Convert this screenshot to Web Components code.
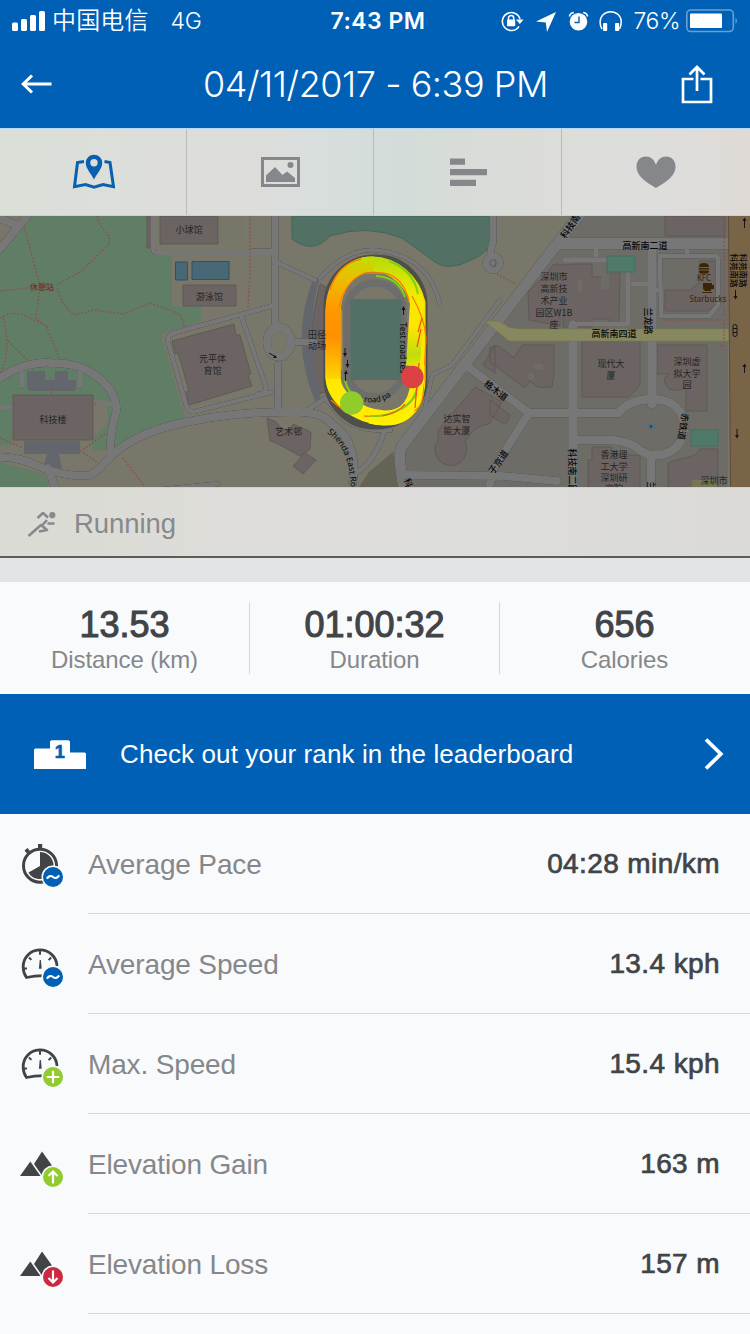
<!DOCTYPE html>
<html lang="en">
<head>
<meta charset="utf-8">
<title>Workout detail</title>
<style>
html,body{margin:0;padding:0}
body{width:750px;height:1334px;overflow:hidden;background:#f9fafc;font-family:"Liberation Sans","Noto Sans CJK SC",sans-serif}
</style>
</head>
<body>
<workout-page></workout-page>
<script>
const define = (name, html) => customElements.define(name, class extends HTMLElement {
  constructor() {
    super();
    this.attachShadow({ mode: 'open' }).innerHTML = typeof html === 'function' ? html(this) : html;
  }
});

define('status-bar', `
<style>
:host{display:grid;grid-template-columns:1fr auto 1fr;align-items:center;height:40px;background:#0060b6;color:#fff;font:400 23px Inter,"Noto Sans CJK SC",sans-serif}
.l,.r{display:flex;align-items:center}
.l{padding-left:12px}
.r{justify-content:flex-end;padding-right:11px}
svg{display:block}
.c{font-size:24px;letter-spacing:.15px;margin-left:6px;font-weight:350;line-height:40px;padding-top:1px}
.g{margin-left:22px;letter-spacing:-.2px;font-weight:350;padding-top:1px}
.t{font-weight:600;letter-spacing:.5px;line-height:40px;padding:1px 0 0 6px}
.p{letter-spacing:-.5px;font-weight:350;margin:0 6px 0 12px;line-height:40px;padding-top:1px}
</style>
<div class="l">
 <svg width="34" height="22" viewBox="0 0 34 22" fill="#fff"><rect x="0" y="12.500" width="6" height="8.500" rx="1.500"/><rect x="9" y="9" width="6" height="12" rx="1.500"/><rect x="18" y="5" width="6" height="16" rx="1.500"/><rect x="27" y="1" width="6" height="20" rx="1.500"/></svg>
 <span class="c">中国电信</span><span class="g">4G</span>
</div>
<div class="t">7:43 PM</div>
<div class="r">
 <svg width="122" height="24" viewBox="498 8 122 24" fill="none" stroke="#fff">
  <path d="M517 25.300A9 9 0 1 1 518 18" stroke-width="1.600"/><path d="M514 18.500h7.600l-3.800 4.600z" fill="#fff" stroke="none"/>
  <path d="M506.500 19v-2a2.600 2.600 0 0 1 5.200 0v2" stroke-width="1.500"/><rect x="505" y="18.600" width="8.200" height="6.600" rx=".8" fill="#fff" stroke="none"/>
  <path d="M554 11L534 20.600l9.800.8L545 31z" fill="#fff" stroke="none"/>
  <circle cx="576.500" cy="20.800" r="8.800" fill="#fff" stroke="none"/><path d="M577 15.500v6h-4.500" stroke="#0060b6" stroke-width="1.400"/>
  <path d="M567.400 15.500q.6-3.400 4.400-4M585.600 15.500q-.6-3.400-4.400-4" stroke-width="1.700"/>
  <path d="M600 28q-2.200-3.500-1.800-7.500a10.500 9.800 0 0 1 21 0q.2 4-1.700 7.500" stroke-width="1.500"/><rect x="601" y="22" width="4.200" height="8" rx="1" fill="#fff" stroke="none"/><rect x="613" y="22" width="4.200" height="8" rx="1" fill="#fff" stroke="none"/>
 </svg>
 <span class="p">76%</span>
 <svg width="53" height="24" viewBox="0 0 53 24"><rect x=".8" y="1" width="46.500" height="21.500" rx="4" fill="none" stroke="#66a0d4" stroke-width="1.600"/><rect x="4" y="4.500" width="32" height="14.500" rx="1" fill="#fff"/><path d="M49.500 8.500q3 3.300 0 6.600z" fill="#66a0d4"/></svg>
</div>`);

define('nav-bar', `
<style>
:host{display:grid;grid-template-columns:50px 1fr 50px;align-items:center;justify-items:center;height:88px;padding:0 28px 0 12px;background:#0060b6;color:#fff;box-sizing:border-box}
h1{margin:0 0 0 17px;font:350 36px/88px Inter,sans-serif;letter-spacing:-.45px;white-space:nowrap}
svg{display:block}
</style>
<svg width="34" height="22" viewBox="0 0 34 22" fill="none" stroke="#fff" stroke-width="3"><path d="M31.500 11H4M12 2.500L3.200 11l8.800 8.500"/></svg>
<h1><slot></slot></h1>
<svg width="34" height="44" viewBox="0 0 34 44" fill="none" stroke="#fff" stroke-width="2.700"><path d="M13.500 17H3v23h28V17H20.500M17 29V5M9.500 12.500L17 5l7.500 7.500"/></svg>`);

define('tab-item', `
<style>
:host{display:flex;align-items:center;justify-content:center;border-right:1px solid #b9bbb9}
:host(:last-child){border-right:0}
</style><slot></slot>`);

define('tab-bar', `
<style>
:host{display:grid;grid-template-columns:187px 187px 188px 1fr;height:88px;box-sizing:border-box;border-top:1px solid #b8d9f3;border-bottom:1px solid #cfd1ce;background:linear-gradient(90deg,#dadfd7 0,#dcdeda 130px,#dddddb 250px,#d8dedb 320px,#d3dcd9 400px,#d8dcd8 460px,#dcdcd9 550px,#dddddc 660px,#dfdad6 750px)}
svg{display:block}
</style>
<tab-item><svg width="44" height="38" viewBox="71 152 44 38" fill="none"><path d="M84 160.500l-6.500 1-3 24.200 11-2.200 8.500 2.700 9-2.700 10.500 2.200-3.500-24.200-5.500-1" stroke="#0860b0" stroke-width="3"/><path fill-rule="evenodd" fill="#0860b0" d="M94 178.500c-3.600-7-8.200-11-8.200-16.600a8.200 8.200 0 0 1 16.400 0c0 5.600-4.600 9.600-8.200 16.600zM94 158a3.700 3.700 0 1 0 0 7.400 3.700 3.700 0 0 0 0-7.400z"/></svg></tab-item>
<tab-item><svg width="40" height="32" viewBox="0 0 40 32"><rect x="2.500" y="2.500" width="36" height="27" fill="none" stroke="#85878a" stroke-width="3"/><path fill="#85878a" d="M6 26v-6.500l9-8.500 7.500 8 4.500-3.500L35 22v4z"/><circle cx="30.500" cy="9" r="3" fill="#85878a"/></svg></tab-item>
<tab-item><svg width="38" height="30" viewBox="0 0 38 30" fill="#85878a"><path d="M1 1.500h15v6.300H1zM1 12h37v6.300H1zM1 22.700h26V29H1z"/></svg></tab-item>
<tab-item><svg width="40" height="34" viewBox="0 0 40 34"><path fill="#85878a" d="M20 33C12 28 .5 22 .5 11.500.5 5.500 4.500 1.500 9.700 1.500c5 0 8.800 3.300 10.300 8.500 1.500-5.200 5.300-8.500 10.300-8.500 5.200 0 9.200 4 9.200 10C39.500 22 28 28 20 33z"/></svg></tab-item>`);

define('route-map', `
<style>
:host{display:block;height:271px;overflow:hidden}
svg{display:block}
.road{fill:none;stroke:#777778;stroke-linecap:round;stroke-linejoin:round;filter:drop-shadow(0 0 .5px #4c4c4c) drop-shadow(0 0 .3px #555)}
.b{fill:#6b6462;stroke:#5c5553;stroke-width:.8}
.path{fill:none;stroke:#8f4f49;stroke-width:1.300;stroke-dasharray:1.800 1.800}
.t{font:9px "Noto Sans CJK SC",sans-serif;fill:#242426;text-anchor:middle}
.r{font:500 9px "Noto Sans CJK SC",sans-serif;fill:#080808;text-anchor:middle}
</style>
<svg width="750" height="271" viewBox="0 216 750 271">
<defs>
 <linearGradient id="tk" gradientUnits="userSpaceOnUse" x1="372" y1="256" x2="372" y2="426"><stop offset="0" stop-color="#c3dc00"/><stop offset=".25" stop-color="#f5d900"/><stop offset=".5" stop-color="#ffe400"/><stop offset="1" stop-color="#ffef00"/></linearGradient>
 <linearGradient id="lf" gradientUnits="userSpaceOnUse" x1="345" y1="256" x2="333" y2="392"><stop offset="0" stop-color="#c3dc00"/><stop offset=".18" stop-color="#eebb00"/><stop offset=".4" stop-color="#ff9800"/><stop offset=".6" stop-color="#ff9000"/><stop offset=".78" stop-color="#ffb800"/><stop offset="1" stop-color="#ffec00"/></linearGradient>
 <linearGradient id="rt" gradientUnits="userSpaceOnUse" x1="410" y1="258" x2="414" y2="372"><stop offset="0" stop-color="#b9dc08"/><stop offset=".35" stop-color="#f4ea00"/><stop offset=".6" stop-color="#ffe500"/><stop offset=".85" stop-color="#c0dd0c"/><stop offset="1" stop-color="#f4ea00"/></linearGradient>
 <g id="roads">
  <path d="M0 249L27 216M0 218l16 7" stroke-width="8"/>
  <path d="M153 214v35q0 4 6 4H272" stroke-width="4"/>
  <path d="M275 214V322" stroke-width="7"/>
  <path d="M272 251h-20M278 263l37 17M272 306L177 332q-11 3-9 10L186 405q3 9 11 6L272 392M241 315l25 72q0 7-8 7" stroke-width="4.500"/>
  <path d="M278 365V412M294 342h20" stroke-width="7"/>
  <ellipse cx="279" cy="342" rx="12" ry="15" stroke-width="8"/>
  <path d="M0 378q25-17 52-15 30 0 48 16 18 15 16 34-5 14-6 40" stroke-width="8"/>
  <path d="M22 372v15M80 372v15M97 404h15M0 407h11" stroke-width="4"/>
  <path d="M0 457q20 0 40 10 30 11 50 8 5-1 22-20 28-25 80-34 50-10 108-9 22 0 32 12 28 18 20 63M48 468l8 22" stroke-width="8"/>
  <path d="M218 484l-60 6M304 412l22-14 14 18q18 16 50 14M384 432q-10 32-30 42" stroke-width="5"/>
  <path d="M320 278q30-33 62-27 48 7 58 54" stroke-width="4"/>
  <path d="M425 408q4-18 7-33l20-10L500 300" stroke-width="4"/>
  <path d="M493 214v28q-4 10-1 22" stroke-width="7"/><circle cx="493" cy="263" r="7.500" stroke-width="6"/>
  <path d="M580 214L402 446q-5 8 2 42" stroke-width="11"/>
  <path d="M467 366l62 47-35 55-5 20M407 475l95 1 55 5" stroke-width="8"/>
  <path d="M561 243.500H728" stroke-width="12"/>
  <path d="M596 245v11M564 260h42M571 324h57V262M632 284h20M687 247v8" stroke-width="4"/>
  <path d="M652 245V404M573 325V490" stroke-width="9.500"/>
  <path d="M660 256h55q3 0 3 4v45l-9 11h-48zM660 290h-10" stroke-width="4.500"/>
  <path d="M530 413h88q10-12 30-14 36-1 36 30-2 22-24 26-14 2-24-8-12-7-28-7h-30M651 455v35" stroke-width="8.500"/>
 </g>
</defs>
<rect y="216" width="750" height="271" fill="#787769"/>
<path fill="#607d65" d="M25 216H147v34l25 7v49l29 1v14l-40 13 24 84-65 33-28-1v-12l15-12V400H0V249zM0 400h12v45H0zM0 462l44 12 5 13H0z"/>
<path fill="#6e6c67" d="M580 216H728V487H402l4-38z"/>
<path fill="#777669" d="M0 216h25L0 247z"/>
<path d="M292 216H493l-2 26q-4 12-20 18-23 12-36 2l-33-24q-35-14-72-2-17 19-38 3z" fill="#537065" stroke="#3f6957"/>
<path class="b" d="M147 216h5v32h-5zM160 216h58v28h-58zM183 285h53v21h-53zM172 341l62-17 2 11 4 0 11 39-3 1 4 11-63 19-3-13 3-1-11-38-3 1zM13 395h80v45H13zM267 418l9 4 7 8h8l2-6 18 8-1 17-10 7-24-13-6-2zM297 462l4-5 4-4 11 7-13 14-10-8zM529 320l-1-28 21-21q4-10 12-6l13-1h18v13h15v-12h13l-1 60h-10v-6h-17v8h-29v-20h-3v19zM665 216h60v20h-60zM665 290h25l9-7v-22h20v42l-11 8h-43zM582 341h58v44l-11 12h-47zM657 345h50v66h-21v-23q-16 6-20-3-4-5 2-11h-11zM490 347l9-1 15 12 8-13h32v30l-2 12q-10 1-14 0l-8-6-5 7-35-26zM490 400l20 15-3 8-5 0-12-8zM592 447h20v8h28v33h-52v-28h4zM718 449v39h-50v-25l11-4q18-2 21-10zM475 387l27 15-13 22q-17 2-24 18a16 16 0 1 1-27-2L438 430zM483 365l12-20v28zM320 284l8 4q-8 40-2 104l-8 2q-14-50 2-110z"/>
<path fill="#6e6c67" d="M536 363l7 1v6h-6l-3-3zM530 372l5 4-3 5-5-4zM601 274h8v15h-8zM578 280h4v12h-4z"/>
<path fill="#64666e" d="M27 371h18v9h10v-9h13v9h8v7q0 4-4 4H32q-4 0-5-4zM24 441h56v13H59l3 15-18-4 3-11H24zM313 279l7-2q-17 58 1 124l-5 2q-27-60-3-124z"/>
<path fill="#777669" d="M219 216h25v27h-25z"/>
<g fill="#496876" stroke="#2d5367"><path d="M175.500 262h12v18h-12zM192 261.500h37v18h-37z"/></g>
<path d="M369 472l24-20 6 35h-40z" fill="#646355"/>
<use href="#roads" class="road"/>
<ellipse cx="279" cy="342" rx="8" ry="11" fill="#787769"/>
<path d="M490 323q10-1 17 6l11 2h211v8H510z" fill="#87885f" stroke="#75774f" stroke-width="5"/>
<path d="M490 323q10-1 17 6l11 2h211v8H510z" fill="#87885f" stroke="#87885f" stroke-width="3.500"/>
<path fill="#4f7969" stroke="#466e60" d="M607 256h28v16h-28zM691 430h27v16h-27z"/>
<path fill="#7a6448" d="M728 216h22v271h-20z"/><path d="M728.500 216l2 271" stroke="#5f4d39"/>
<path d="M692 487v-7h25v7" fill="#777553"/>
<circle cx="651" cy="426.500" r="3.500" fill="#507080"/><circle cx="651" cy="426.500" r="1.300" fill="#243e4e"/>
<circle cx="493" cy="263" r="3" fill="none" stroke="#5e5e5b"/>
<path class="path" d="M97 216q3 12 10 17 7 10-4 17-12 12-23 22l-23 13M24 226l16 60-4 33 10 7 14 34M0 291l31-3M57 288q7 22 18 27l18-5 31 4 26-11 30 11 5 14M0 318q14-10 34 2l15 7M3 318q9 32-3 56M8 341l20 20M0 438l23 10M105 434l-24 17 17 12M123 458l22 29M250 216v57l-2 35M497 274l18 10M724 216v100M666 320h58v26h-6M51 388v8"/>
<g fill="none">
 <rect x="327" y="258" width="97" height="168" rx="47" stroke="#4f4f49" stroke-width="7"/>
 <rect x="347" y="283" width="56" height="114" rx="28" fill="#787769" stroke="#6c6d6c" stroke-width="7"/>
 <rect x="350.500" y="299" width="51" height="81" fill="#527066"/>
 <path d="M372 264c22 0 41 17 46 39v70c1 28-10 46-34 45-29-2-50-22-51-40V311c1-24 16-47 39-47z" stroke="url(#tk)" stroke-width="15"/>
 <path d="M374 264c-25-1-41 22-41 47v68" stroke="url(#lf)" stroke-width="15"/>
 <path d="M373 264c22 1 39 18 44 39l-4 63" stroke="url(#rt)" stroke-width="14"/>
 <path d="M330 290q8-26 31-31M339 308q5-27 26-35h18q20 3 26 28M341.500 370v-60M331 400l12 10M413 411q8-2 10-15l3-58q-1-19-14-42M364 416q35 3 53-22" stroke="#ff7d00" stroke-width="1.300"/>
 <path d="M389 261q25 10 29 33M419 370q0 31-18 39-14 8-31 7M345 380q3 14 14 20M376 276q22 1 29 21" stroke="#7bd116" stroke-width="2"/>
 <path d="M423 365q1 36-14 49-14 14-40 8" stroke="#fff200" stroke-width="3"/>
 <path d="M419 363l-4 45M382 416q16-3 23-12M421 329l-4 18M422 318l-4 14" stroke="#ef4f17" stroke-width="1.200"/>
</g>
<g stroke="#161616" fill="#161616"><path d="M345 348v7M347.500 360v7M345.500 373v8M403.500 308v7M269 353l7 4" fill="none"/><path d="M343 353h4l-2 4zM345.500 364h4l-2 4zM344 374h4l-2-4zM401.500 310h4l-2-4zM277 358l-4 0 2-3z" stroke="none"/></g>
<g class="t">
 <text x="189" y="233">小球馆</text><text x="209.500" y="299.500">游泳馆</text><text x="212.500" y="362">元平体</text><text x="212.500" y="374">育馆</text><text x="53" y="422.500">科技楼</text><text x="42" y="290" style="fill:#772d30;font-size:8px;font-weight:500">休憩站</text>
 <text x="317" y="338">田径</text><text x="317" y="349">动场</text><text x="288.500" y="435">艺术邨</text><text x="457" y="422">达实智</text><text x="457" y="434">能大厦</text>
 <text x="554" y="280">深圳市</text><text x="554" y="292">高新技</text><text x="554" y="304">术产业</text><text x="554" y="316">园区W1B</text><text x="554" y="328">座</text>
 <text x="611" y="367">现代大</text><text x="611" y="379">厦</text><text x="687" y="365">深圳虚</text><text x="687" y="377">拟大学</text><text x="687" y="388">园</text>
 <text x="614" y="458">香港理</text><text x="614" y="470">工大学</text><text x="614" y="481">深圳研</text><text x="614" y="492">究院</text><text x="714" y="484">深圳市</text>
 <g style="fill:#3b2507;font-family:'Noto Sans',sans-serif;font-size:8px"><text x="704" y="281">KFC</text><text x="708" y="302">Starbucks</text></g>
</g>
<path d="M699 267q0-4 5-4t5 4zM699 268h10v1.500h-10zM699 270.500h10q0 3-2 3h-6q-2 0-2-3zM703 283h9v2h2v4h-3v2h-6q-2-1-2-3zM702 292h10v1h-10z" fill="#3b2507"/>
<g class="r">
 <text x="645" y="248.500">高新南二道</text><text x="614" y="336.500">高新南四道</text>
 <text transform="translate(573 228) rotate(-55)">科技南</text>
 <text transform="translate(645 321) rotate(90)">兰龙路</text><text transform="translate(569 471) rotate(90)">科技南二路</text><text transform="translate(648 486) rotate(90)">兰</text>
 <text transform="translate(680 426) rotate(98)">赤铁道</text><text transform="translate(494 393) rotate(38)">格木道</text><text transform="translate(501 464) rotate(-55)">子京道</text><text transform="translate(405 484) rotate(70)">科</text>
 <text transform="translate(731 270.500) rotate(90)" style="font-size:8.500px">科苑南路</text><text transform="translate(740 270.500) rotate(90)" style="font-size:8.500px">科苑南路</text>
 <path id="se" d="M327 433Q355 452 350 505" fill="none"/><text style="font:8.500px 'Noto Sans',sans-serif;text-anchor:start"><textPath href="#se">Shenda East Road</textPath></text>
 <text transform="translate(400 348) rotate(90)" style="font:8.500px 'Noto Sans',sans-serif">Test road tes</text>
 <path id="rd" d="M359 401Q393 408 401 379" fill="none"/><text style="font:8px 'Noto Sans',sans-serif;text-anchor:start"><textPath href="#rd">t road pa</textPath></text>
</g>
<g stroke="#151515" fill="#151515"><path d="M744.500 228v-8M735.500 290v8M744.500 373v-8M737 429v8" fill="none"/><path d="M742.500 221h4l-2-3.500zM733.500 296h4l-2 3.500zM742.500 367h4l-2-3.500zM735 435h4l-2 3.500z" stroke="none"/><rect x="733" y="324.500" width="4" height="12" rx="2" fill="none"/><path d="M733 328.500h4M733 332.500h4"/></g>
<circle cx="351.700" cy="403" r="11.700" fill="#91cb2c"/><circle cx="412.300" cy="377" r="11.300" fill="#dc4144"/>
</svg>`);

define('activity-label', `
<style>
:host{display:flex;align-items:center;height:71px;box-sizing:border-box;padding-left:27px;gap:17px;border-top:1px solid #d0d0cc;border-bottom:2px solid #5e5d55;background:linear-gradient(90deg,#dadbd4,#dddcd8 200px,#dddddc 450px,#dbdad6);color:#87898b;font-size:27.500px;letter-spacing:-.05px}
svg{display:block;margin-top:3px}span{padding-top:4px}
</style>
<svg width="30" height="28" viewBox="0 0 30 28" fill="none" stroke="#87898b" stroke-width="2.600"><circle cx="25.300" cy="5.200" r="3.100" fill="#87898b" stroke="none"/><path d="M1.500 26L14 15l6 5-8 1.500M10.500 8l5.500-5 5 4.500M20 10l-4.500 5M20.500 13.500h7" stroke-linejoin="round"/></svg>
<span><slot></slot></span>`);

define('stat-cell', host => `
<style>
:host{display:flex;flex-direction:column;align-items:center;height:72px;border-right:1px solid #d5d7d9;box-sizing:border-box;margin-top:20px}
:host(:last-child){border-right:0}
b{font:400 36px/46px "Liberation Sans",sans-serif;color:#414447;-webkit-text-stroke:1.100px #414447}
span{font-size:24px;line-height:24px;color:#85878a;letter-spacing:-.08px}
</style><b>${host.getAttribute('value')}</b><span><slot></slot></span>`);

define('stat-strip', `
<style>:host{display:grid;grid-template-columns:250px 250px 249px;height:112px;margin-top:24px;background:#f9fafc}</style><slot></slot>`);

define('leaderboard-banner', `
<style>
:host{display:flex;align-items:center;height:120px;box-sizing:border-box;padding:0 25px 0 34px;background:#0060b6;color:#fff;font-size:26px;letter-spacing:.1px}
span{flex:1;margin-left:34px;padding-top:1px}svg{display:block}
.n{font:bold 18px "Liberation Sans",sans-serif;fill:#0060b6;stroke:#0060b6;stroke-width:.700}
</style>
<svg width="52" height="30" viewBox="0 0 52 30"><path fill="#fff" d="M0 11q0-1.500 1.500-1.500H16V3q0-1.800 1.800-1.800h16.400Q36 1.200 36 3v10.500h14.500q1.500 0 1.500 1.500v15H0z"/><text class="n" x="25.800" y="18.500" text-anchor="middle">1</text></svg>
<span><slot></slot></span>
<svg width="22" height="34" viewBox="0 0 22 34" fill="none" stroke="#fff" stroke-width="3.800"><path d="M3 2.500L17.800 17 3 31.500"/></svg>`);

const glyphs = {
  watch: '<circle cx="22" cy="25.700" r="16.500" stroke-width="3" fill="none" stroke="#414447"/><path d="M20 4h4.200v5H20zM6.500 10.500l3-2.500 2.500 3-3 2.500zM22 12a13.500 13.500 0 0 1 0 27c-5 0-9-2-11.500-6.500L22 26z" fill="#414447"/>',
  gauge: '<path d="M26 35.700q-10 0-17.500 1.800Q5.200 33 5.200 27.300A16.800 16.600 0 0 1 39 26" fill="none" stroke="#414447" stroke-width="2.800"/><path d="M22 11v3.800M11 17.500l2.400 2.400M33.200 17.500l-2.600 2.600M5.500 28.500h3.500" stroke="#414447" stroke-width="2"/><path d="M21.700 20h1.200l.8 8.800h-2.800z" fill="#414447"/>',
  hills: '<path d="M24 11.500l10 14L23.800 35 16 24z M12.300 21.500l10.200 14.500H2z" fill="#414447"/>'
};
const badges = {
  avg: ['#0060b6', '<path d="M28.800 38.600q3-4.200 6.200-1.600t6.200-1.600"/>'],
  max: ['#91cb2c', '<path d="M28.700 37h12.600M35 30.700v12.600"/>'],
  up: ['#91cb2c', '<path d="M35 43.500V32M30.500 36l4.500-4.500 4.500 4.500"/>'],
  down: ['#cb2941', '<path d="M35 30.500V42M30.500 38l4.500 4.500 4.500-4.500"/>']
};
define('metric-row', host => {
  const [color, mark] = badges[host.getAttribute('badge')];
  return `
<style>
:host{display:flex;height:100px;padding-left:18px}
svg{display:block;margin-top:26px}
.body{display:flex;flex:1;align-items:center;justify-content:space-between;margin-left:20px;padding-right:30px;border-bottom:1px solid #d5d7d9;box-sizing:border-box}
.k{font-size:28px;letter-spacing:-.15px;color:#85878a;padding-top:3px}
.v{font-size:28px;letter-spacing:.4px;color:#414447;-webkit-text-stroke:.7px #414447}
</style>
<svg width="50" height="50" viewBox="0 0 50 50">${glyphs[host.getAttribute('icon')]}<circle cx="35" cy="37" r="11.500" fill="#f9fafc"/><circle cx="35" cy="37" r="10" fill="${color}"/><g fill="none" stroke="#fff" stroke-width="2.200">${mark}</g></svg>
<div class="body"><span class="k"><slot></slot></span><span class="v">${host.getAttribute('value')}</span></div>`;
});

define('workout-page', `
<style>:host{display:flex;flex-direction:column;width:750px;height:1334px;overflow:hidden;background:#e1e5e8}
main{background:#f9fafc;flex:1}
:host>*{flex-shrink:0}</style>
<status-bar></status-bar>
<nav-bar>04/11/2017 - 6:39 PM</nav-bar>
<tab-bar></tab-bar>
<route-map></route-map>
<activity-label>Running</activity-label>
<stat-strip><stat-cell value="13.53">Distance (km)</stat-cell><stat-cell value="01:00:32">Duration</stat-cell><stat-cell value="656">Calories</stat-cell></stat-strip>
<leaderboard-banner>Check out your rank in the leaderboard</leaderboard-banner>
<main>
<metric-row icon="watch" badge="avg" value="04:28 min/km">Average Pace</metric-row>
<metric-row icon="gauge" badge="avg" value="13.4 kph">Average Speed</metric-row>
<metric-row icon="gauge" badge="max" value="15.4 kph">Max. Speed</metric-row>
<metric-row icon="hills" badge="up" value="163 m">Elevation Gain</metric-row>
<metric-row icon="hills" badge="down" value="157 m">Elevation Loss</metric-row>
</main>`);
</script>
</body>
</html>
